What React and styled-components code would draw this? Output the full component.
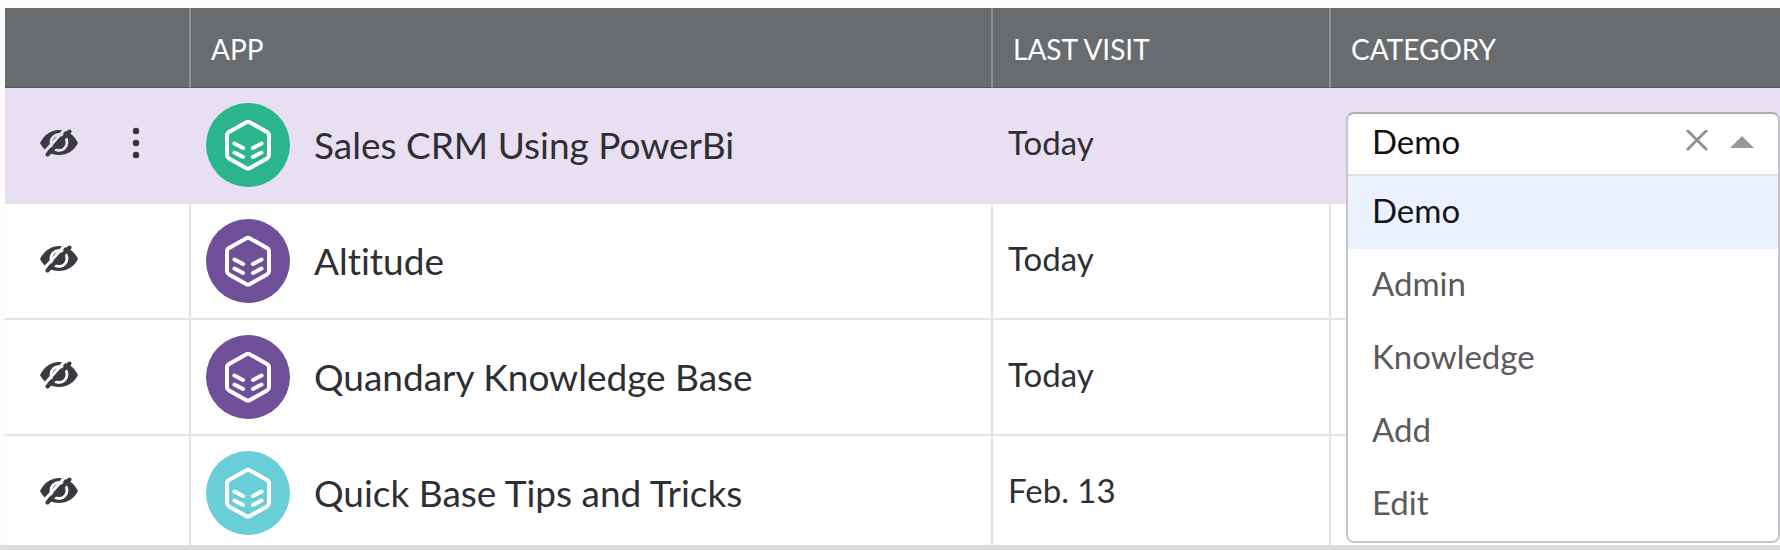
import React, { useState } from 'react'
import styled, { createGlobalStyle } from 'styled-components'

const APPS = [
  { id: 1, name: 'Sales CRM Using PowerBi', lastVisit: 'Today', color: '#2bb58a' },
  { id: 2, name: 'Altitude', lastVisit: 'Today', color: '#6f4f98' },
  { id: 3, name: 'Quandary Knowledge Base', lastVisit: 'Today', color: '#6f4f98' },
  { id: 4, name: 'Quick Base Tips and Tricks', lastVisit: 'Feb. 13', color: '#69ced7' },
]

const CATEGORIES = ['Demo', 'Admin', 'Knowledge', 'Add', 'Edit']

const GlobalStyle = createGlobalStyle`
  * {
    box-sizing: border-box;
  }

  body {
    margin: 0;
    background-color: #fdfdfe;
    color: #2e2f33;
    font-family: Lato, 'Open Sans', sans-serif;
    font-variant-ligatures: none;
  }

  button,
  input {
    font: inherit;
    color: inherit;
  }
`

const Page = styled.main`
  display: flex;
  flex-direction: column;
  height: 100vh;
  border-bottom: 5px solid #dcdcdc;
`

const TableWrapper = styled.div`
  flex: 1;
  min-height: 0;
  padding: 8px 0 0 5px;
  overflow: hidden;
`

const StyledTable = styled.table`
  width: 100%;
  table-layout: fixed;
  border-collapse: separate;
  border-spacing: 0;
`

const Th = styled.th`
  width: ${props => props.$width || 'auto'};
  height: 80px;
  padding: 2px 20px 0;
  border-right: 2px solid #8f9294;
  border-bottom: 1px solid #55585c;
  background-color: #686c6e;
  color: #fff;
  font-size: 28px;
  font-weight: 400;
  line-height: 36px;
  text-align: left;

  &:last-child {
    border-right: 0;
  }
`

const Tr = styled.tr`
  background-color: ${props => (props.$active ? '#e8dff2' : '#fff')};
`

const Td = styled.td`
  position: relative;
  height: 116px;
  padding: 0 15px;
  border-right: 2px solid #e4e3e6;
  border-bottom: 2px solid #e4e3e6;
  font-size: 33px;
  line-height: 40px;

  &:last-child {
    border-right: 0;
  }
`

const Actions = styled.div`
  display: flex;
  align-items: center;
  gap: 54px;
  padding: 0 20px 4px;
`

const IconButton = styled.button`
  display: flex;
  padding: 0;
  border: 0;
  background: none;
  cursor: pointer;
`

const AppLink = styled.a`
  display: flex;
  align-items: center;
  gap: 24px;
  color: inherit;
  font-size: 37px;
  text-decoration: none;
`

const AppBadge = styled.span`
  display: flex;
  align-items: center;
  justify-content: center;
  width: 84px;
  height: 84px;
  border-radius: 50%;
  background-color: ${props => props.$color};
`

const VisitDate = styled.div`
  padding-bottom: 6px;
`

const Dropdown = styled.div`
  position: absolute;
  z-index: 1;
  top: 24px;
  left: 15px;
  right: 0;
  overflow: hidden;
  border: 2px solid #c6c5c9;
  border-top-color: #b0aab5;
  border-radius: 8px;
  background-color: #fff;
`

const Field = styled.div`
  display: flex;
  align-items: center;
  gap: 22px;
  height: 60px;
  padding: 0 24px 6px;
`

const FieldInput = styled.input`
  flex: 1;
  min-width: 0;
  padding: 0;
  border: 0;
  outline: 0;
  background: none;
  color: #111;
`

const Options = styled.ul`
  margin: 0;
  padding: 0;
  border-top: 2px solid #dfe1e6;
  list-style: none;
`

const Option = styled.li`
  height: 73px;
  padding: 0 24px;
  background-color: ${props => (props.$selected ? '#ebf2fe' : '#fff')};
  color: ${props => (props.$selected ? '#14161c' : '#5a5a5b')};
  line-height: 68px;
  cursor: pointer;
`

const HiddenIcon = () => (
  <svg width="38" height="28" viewBox="0 0 38 28" fill="none" aria-hidden="true">
    <mask id="eye-cutout" maskUnits="userSpaceOnUse" x="0" y="0" width="38" height="28">
      <path d="M0 0h38v28H0Z" fill="#fff" />
      <circle cx="19" cy="13.500" r="8" stroke="#000" strokeWidth="2.800" />
      <path d="M2 26L26 -1" stroke="#000" strokeWidth="3" />
    </mask>
    <path d="M0 14C4 6 11 1 19 1s15 5 19 13c-4 8-11 12-19 12S4 22 0 14Z" fill="#3a3a42" mask="url(#eye-cutout)" />
    <path d="M7.500 25.500L29.500 2.500" stroke="#3a3a42" strokeWidth="4" strokeLinecap="round" />
  </svg>
)

const DotsIcon = () => (
  <svg width="8" height="32" viewBox="0 0 8 32" fill="#34343c" aria-hidden="true">
    <circle cx="4" cy="4" r="3.200" />
    <circle cx="4" cy="16" r="3.200" />
    <circle cx="4" cy="28" r="3.200" />
  </svg>
)

const CubeIcon = () => (
  <svg width="48" height="52" viewBox="0 0 48 52" fill="none" stroke="#fff" strokeLinecap="round" strokeLinejoin="round" aria-hidden="true">
    <path d="M22 3.400Q24 2.200 26 3.400L43 13Q45 14.200 45 16.500V36Q45 38.200 43 39.400L26 49Q24 50.200 22 49L5 39.400Q3 38.200 3 36V16.500Q3 14.200 5 13Z" strokeWidth="4" />
    <path d="M10.500 24.500l8.500 4.500M10.500 33.500l8.500 4.500M37.500 24.500l-8.500 4.500M37.500 33.500l-8.500 4.500" strokeWidth="4" />
  </svg>
)

const ClearIcon = () => (
  <svg width="22" height="22" viewBox="0 0 22 22" fill="none" aria-hidden="true">
    <path d="M1 0l20 20M21 0L1 20" stroke="#8e8e8e" strokeWidth="2.800" />
  </svg>
)

const ArrowIcon = () => (
  <svg width="24" height="22" viewBox="0 0 24 22" aria-hidden="true">
    <path d="M0 18L12 6l12 12Z" fill="#989898" />
  </svg>
)

const CategorySelect = () => {
  const [value, setValue] = useState('Demo')
  const [open, setOpen] = useState(true)

  return (
    <Dropdown>
      <Field>
        <FieldInput
          role="combobox"
          aria-label="Category"
          aria-expanded={open}
          aria-controls="category-options"
          value={value}
          onChange={event => setValue(event.target.value)}
        />
        <IconButton type="button" aria-label="Clear category" onClick={() => setValue('')}>
          <ClearIcon />
        </IconButton>
        <IconButton type="button" aria-label="Toggle categories" onClick={() => setOpen(!open)}>
          <ArrowIcon />
        </IconButton>
      </Field>
      {open && (
        <Options id="category-options" role="listbox" aria-label="Categories">
          {CATEGORIES.map(category => (
            <Option
              key={category}
              role="option"
              aria-selected={category === value}
              $selected={category === value}
              onClick={() => setValue(category)}
            >
              {category}
            </Option>
          ))}
        </Options>
      )}
    </Dropdown>
  )
}

const AppRow = ({ app, active }) => (
  <Tr $active={active}>
    <Td>
      <Actions>
        <IconButton type="button" aria-label={`Hide ${app.name}`}>
          <HiddenIcon />
        </IconButton>
        {active && (
          <IconButton type="button" aria-label={`More actions for ${app.name}`}>
            <DotsIcon />
          </IconButton>
        )}
      </Actions>
    </Td>
    <Td>
      <AppLink href="#">
        <AppBadge $color={app.color}>
          <CubeIcon />
        </AppBadge>
        {app.name}
      </AppLink>
    </Td>
    <Td>
      <VisitDate>{app.lastVisit}</VisitDate>
    </Td>
    <Td>{active && <CategorySelect />}</Td>
  </Tr>
)

const App = () => {
  return (
    <Page>
      <GlobalStyle />
      <TableWrapper>
        <StyledTable>
          <thead>
            <tr>
              <Th $width="186px" aria-label="Actions" />
              <Th>APP</Th>
              <Th $width="338px">LAST VISIT</Th>
              <Th $width="449px">CATEGORY</Th>
            </tr>
          </thead>
          <tbody>
            {APPS.map((app, index) => (
              <AppRow key={app.id} app={app} active={index === 0} />
            ))}
          </tbody>
        </StyledTable>
      </TableWrapper>
    </Page>
  )
}

export default App
